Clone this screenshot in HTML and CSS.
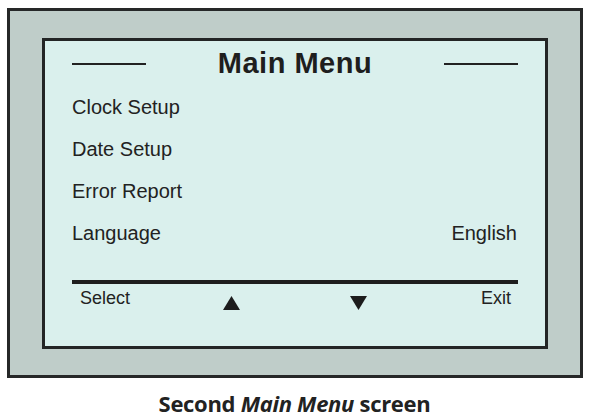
FILE: index.html
```html
<!DOCTYPE html>
<html>
<head>
<meta charset="utf-8">
<link rel="stylesheet" href="styles.css">
</head>
<body>
<div class="frame">
  <div class="screen">
    <div class="title-row">
      <span class="rule"></span>
      <h1 class="title">Main Menu</h1>
      <span class="rule"></span>
    </div>
    <ul class="menu">
      <li class="item"><span>Clock Setup</span></li>
      <li class="item"><span>Date Setup</span></li>
      <li class="item"><span>Error Report</span></li>
      <li class="item"><span>Language</span><span class="value">English</span></li>
    </ul>
    <div class="bar"></div>
    <div class="footer">
      <span class="select">Select</span>
      <svg class="arrow up" width="17" height="14" viewBox="0 0 17 14"><polygon points="8.5,0 17,14 0,14" fill="#1c1c1c"/></svg>
      <svg class="arrow down" width="17" height="14" viewBox="0 0 17 14"><polygon points="0,0 17,0 8.5,14" fill="#1c1c1c"/></svg>
      <span class="exit">Exit</span>
    </div>
  </div>
</div>
<p class="caption">Second <em>Main Menu</em> screen</p>
</body>
</html>
```
FILE: styles.css
```css
html, body {
  margin: 0;
  padding: 0;
  background: #ffffff;
}
body {
  width: 599px;
  height: 419px;
  overflow: hidden;
  font-family: "Liberation Sans", Arial, sans-serif;
  color: #222222;
}
.frame {
  box-sizing: border-box;
  margin: 8px 0 0 7px;
  width: 576px;
  height: 370px;
  border: 3px solid #262828;
  background: #bfcdc9;
  padding: 27px 32px 26px 32px;
}
.screen {
  box-sizing: border-box;
  height: 100%;
  border: 3px solid #232525;
  background: #daf0ed;
  padding: 5px 27px 0 27px;
}
.title-row {
  display: flex;
  align-items: center;
  justify-content: space-between;
  height: 34px;
}
.rule {
  width: 74px;
  height: 2px;
  background: #222;
  margin-top: 1px;
}
.title {
  margin: 0;
  font-size: 29px;
  line-height: 34px;
  font-weight: 700;
  letter-spacing: 0.5px;
  color: #1e1e1e;
}
.menu {
  list-style: none;
  margin: 6px 0 0 0;
  padding: 0;
}
.item {
  display: flex;
  justify-content: space-between;
  font-size: 20px;
  line-height: 42px;
  height: 42px;
}
.value {
  margin-right: 1px;
}
.bar {
  margin-top: 26px;
  height: 4px;
  background: #1e1e1e;
}
.footer {
  display: flex;
  align-items: flex-start;
  margin-top: 3px;
  padding: 0 7px 0 8px;
  font-size: 18px;
  line-height: 22px;
}
.arrow {
  display: block;
  margin-top: 9px;
}
.up {
  margin-left: 93px;
}
.down {
  margin-left: 110px;
}
.exit {
  margin-left: auto;
}
.caption {
  margin: 11px 0 0 0;
  text-align: center;
  padding-right: 10px;
  font-family: "Open Sans", sans-serif;
  font-weight: 700;
  font-size: 22px;
  line-height: 28px;
  color: #222222;
  letter-spacing: -0.3px;
}
.caption em {
  font-style: italic;
}
```
